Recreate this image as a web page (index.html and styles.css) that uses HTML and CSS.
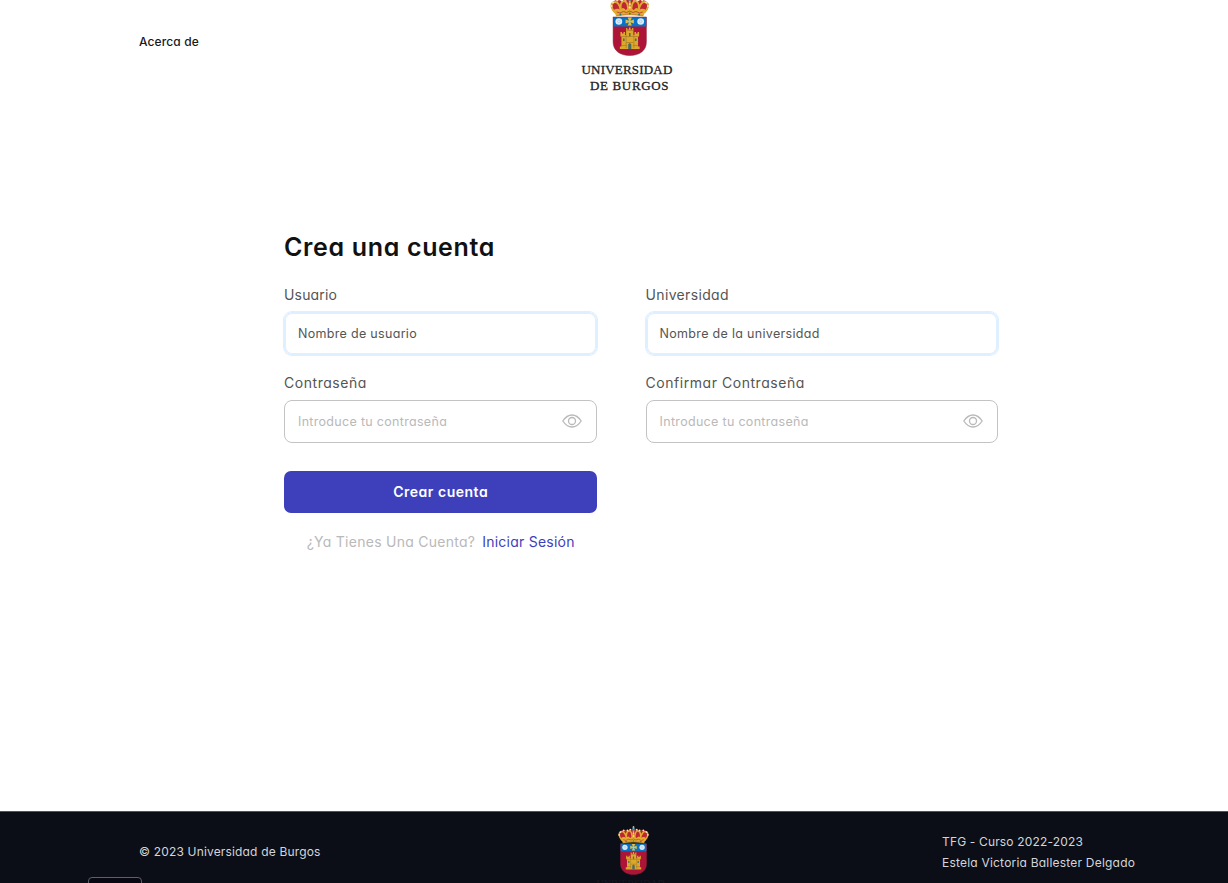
FILE: index.html
```html
<!DOCTYPE html>
<html lang="es">
<head>
<meta charset="utf-8">
<title>Crea una cuenta</title>
<link rel="stylesheet" href="styles.css">
</head>
<body>
<svg class="defs" width="0" height="0" aria-hidden="true">
  <defs>
    <symbol id="crest" viewBox="0 0 76 122" preserveAspectRatio="none">
      <path d="M6 44h64v50c0 17-13 27-32 27S6 111 6 94z" fill="#ad1438"/>
      <path d="M6 44h64v19H6z" fill="#0873c4"/>
      <path d="M6 44h64v50c0 17-13 27-32 27S6 111 6 94z" fill="none" stroke="#8a2038" stroke-width="1"/>
      <g fill="#dfeaf6"><circle cx="17" cy="53" r="6.500"/><circle cx="59" cy="53" r="6.500"/></g>
      <g fill="none" stroke="#9fc0e2" stroke-width="1.2"><circle cx="17" cy="53" r="2.5"/><circle cx="59" cy="53" r="2.5"/></g>
      <path d="M34 45h8l-2.500 6.500L46 49v8l-6.500-2.500L42 61h-8l2.500-6.500L30 57v-8l6.500 2.500z" fill="#dcc04e"/>
      <path d="M20 74h3v3h3v-3h3v6h2V66h2.500v3h3v-4h3v4h3v-3H45v14h2v-6h3v3h3v-3h3v9h-2v20h3v5H19v-5h3V83h-2z" fill="#dba92a"/>
      <path d="M35 108v-9q3-6 6 0v9zM25 87h3v5h-3zM48 87h3v5h-3zM36.500 76h3v7h-3z" fill="#4a6a62"/>
      <path d="M22 83h32M31 95h14M22 101h10M44 101h10M31 80v26M46 80v26M32 71h13" stroke="#a0702a" stroke-width="1.1" fill="none"/>
      <path d="M10 36C2 28-1 19 5 14c6-6 14-5 18-1 5-6 10-5 15-4 5-1 10-2 15 4 4-4 12-5 18 1 6 5 3 14-5 22z" fill="#bd2634"/>
      <path d="M10 36C3 28 0 19 6 15c7-4 14 4 15 18M22 34c-3-12-1-20 5-22 7 0 8 11 8 22M54 34c3-12 1-20-5-22-7 0-8 11-8 22M66 36c7-8 10-17 4-21-7-4-14 4-15 18M38 10v25" fill="none" stroke="#e0aa30" stroke-width="3.600"/>
      <path d="M7 30q8-5 13 0 5-8 10 0 7-7 16 0 5-8 10 0 6-5 13 0l-5 13q-26-5-52 0z" fill="#e3ab2d"/>
      <path d="M13 34l6 2 7-3 6 2 6-3 6 3 6-2 7 3 6-2" fill="none" stroke="#b94530" stroke-width="1.800"/>
      <path d="M13 41q25-6 50 0" fill="none" stroke="#b78336" stroke-width="1.500"/>
      <g fill="#f7e4aa"><circle cx="3" cy="22" r="2.2"/><circle cx="6" cy="15" r="2.2"/><circle cx="14" cy="11" r="2.2"/><circle cx="23" cy="11" r="2.2"/><circle cx="30" cy="9" r="2.2"/><circle cx="46" cy="9" r="2.2"/><circle cx="53" cy="11" r="2.2"/><circle cx="62" cy="11" r="2.2"/><circle cx="70" cy="15" r="2.2"/><circle cx="73" cy="22" r="2.2"/><circle cx="38" cy="18" r="2"/><circle cx="38" cy="25" r="2"/></g>
      <g fill="#25796c"><circle cx="20" cy="39" r="1.800"/><circle cx="38" cy="37" r="1.800"/><circle cx="56" cy="39" r="1.800"/></g>
      <circle cx="38" cy="8" r="3.6" fill="#337da3"/>
      <path d="M36.8 0h2.4v2h2v2h-2v3h-2.4V4h-2V2h2z" fill="#d9b14b"/>
    </symbol>
    <symbol id="eye" viewBox="0 0 20 14">
      <path d="M.8 7Q4.8 1 10 1t9.200 6Q15.200 13 10 13T.8 7z" fill="none" stroke="currentColor" stroke-width="1.3" stroke-linejoin="round"/>
      <circle cx="10" cy="7" r="3.5" fill="none" stroke="currentColor" stroke-width="1.3"/>
    </symbol>
  </defs>
</svg>
<div class="page">
  <header class="header">
    <a class="about">Acerca de</a>
    <div class="brand">
      <svg class="brand-crest"><use href="#crest"/></svg>
      <span class="brand-line brand-first">UNIVERSIDAD</span>
      <span class="brand-line brand-second">DE BURGOS</span>
    </div>
  </header>
  <main class="main">
    <h1 class="title"><span>Crea una cuenta</span></h1>
    <form class="form">
      <div class="field">
        <label class="label l-user">Usuario</label>
        <div class="input focused"><span>Nombre de usuario</span></div>
      </div>
      <div class="field">
        <label class="label l-univ">Universidad</label>
        <div class="input focused"><span>Nombre de la universidad</span></div>
      </div>
      <div class="field">
        <label class="label l-pass">Contraseña</label>
        <div class="input"><span>Introduce tu contraseña</span><svg class="eye"><use href="#eye"/></svg></div>
      </div>
      <div class="field">
        <label class="label l-pass">Confirmar Contraseña</label>
        <div class="input"><span>Introduce tu contraseña</span><svg class="eye"><use href="#eye"/></svg></div>
      </div>
      <div class="actions">
        <button class="submit" type="button">Crear cuenta</button>
        <p class="signin"><span class="question">¿Ya Tienes Una Cuenta?</span><a class="login">Iniciar Sesión</a></p>
      </div>
    </form>
  </main>
  <footer class="footer">
    <div class="footer-left">
      <p class="copyright">© 2023 Universidad de Burgos</p>
      <div class="chip"></div>
    </div>
    <div class="footer-brand"><svg class="footer-crest"><use href="#crest"/></svg><span class="footer-name">UNIVERSIDAD</span></div>
    <div class="credits"><span class="course">TFG - Curso 2022-2023</span><span class="author">Estela Victoria Ballester Delgado</span></div>
  </footer>
</div>
</body>
</html>
```
FILE: styles.css
```css
* { box-sizing: border-box; }
body { margin: 0; background: #fff; font-family: Inter, "Open Sans", sans-serif; font-feature-settings: "cv11" 1; }
.defs { display: block; }
.page { height: 883px; overflow: hidden; display: flex; flex-direction: column; }
.header { height: 100px; display: grid; grid-template-columns: 577px 100px; flex: none; }
.about { padding: 33px 0 0 139px; font-size: 12px; line-height: 17px; font-weight: 500; color: #18181b; letter-spacing: .12px; }
.brand { display: flex; flex-direction: column; align-items: flex-start; }
.brand-crest { width: 39.500px; height: 61px; margin: -5px 0 0 33.300px; flex: none; }
.brand-line { font-family: "Liberation Serif", serif; font-size: 13px; line-height: 16px; color: #222; white-space: nowrap; -webkit-text-stroke: .3px #222; }
.brand-first { margin: 6px 0 0 4.500px; letter-spacing: .2px; }
.brand-second { margin-left: 13px; letter-spacing: .65px; }
.main { flex: 1; padding: 128px 230px 0 284px; }
.title { margin: 0; font-size: 25px; line-height: 38px; font-weight: 600; color: #111; letter-spacing: .66px; }
.form { display: grid; grid-template-columns: 313.400px 352px; column-gap: 48.200px; margin-top: 18px; }
.field { height: 88px; display: flex; flex-direction: column; }
.label { font-size: 14px; line-height: 22px; color: #555; white-space: nowrap; }
.l-user { letter-spacing: .17px; }
.l-univ { letter-spacing: .34px; }
.l-pass { letter-spacing: .54px; }
.input { width: 100%; height: 43px; margin-top: 6px; padding: 0 14px 0 13px; display: flex; align-items: center; justify-content: space-between; border: 1px solid #c3c3c3; border-radius: 8px; font-size: 12.500px; letter-spacing: .31px; color: #b9b9b9; }
.focused { border-color: #deefff; box-shadow: 0 0 0 1px #deefff, inset 0 0 0 1px #deefff; color: #555; }
.eye { width: 20px; height: 14px; flex: none; margin-top: -1px; }
.actions { padding-top: 11px; }
.submit { display: block; width: 100%; height: 42px; padding: 0; border: 0; border-radius: 7px; background: #3e3fbb; color: #fff; font: 600 14px/42px Inter, sans-serif; font-feature-settings: "cv11" 1; letter-spacing: .52px; }
.signin { width: max-content; margin: 16px auto 0; display: flex; gap: 7px; font-size: 14px; line-height: 25px; color: #b9b9b9; white-space: nowrap; }
.question { letter-spacing: .26px; }
.login { color: #3e3fbb; letter-spacing: .24px; }
.footer { height: 72px; flex: none; display: grid; grid-template-columns: 577px 365px 1fr; background: #0b0e17; border-top: 1px solid #50535b; color: #d3d5da; font-size: 12px; }
.footer-left { padding: 31px 0 0 88px; }
.copyright { margin: 0 0 16px 51px; line-height: 18px; letter-spacing: .17px; }
.chip { width: 54px; height: 20px; border: 1px solid #5e6069; border-radius: 4px; background: #080711; }
.footer-brand { padding: 13.500px 0 0 40.500px; display: flex; flex-direction: column; }
.footer-crest { width: 31px; height: 49px; flex: none; }
.footer-name { margin: 3px 0 0 -21px; font: 10px/12px "Liberation Serif", serif; color: #181a22; }
.credits { padding-top: 18.500px; display: flex; flex-direction: column; line-height: 21px; white-space: nowrap; }
.course { letter-spacing: .16px; }
.author { letter-spacing: .21px; }
```
